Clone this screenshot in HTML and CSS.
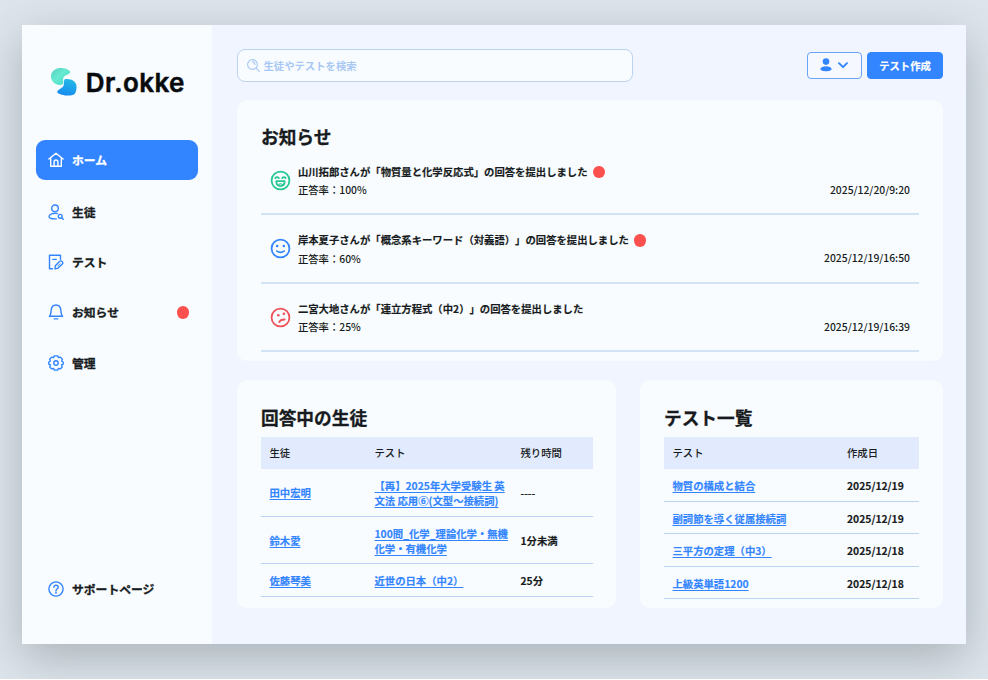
FILE: index.html
```html
<!DOCTYPE html>
<html lang="ja">
<head>
<meta charset="utf-8">
<title>Dr.okke</title>
<link rel="stylesheet" href="styles.css">
</head>
<body>
<div class="stage">
<div class="window">
  <aside class="sidebar">
    <div class="logo">
      <svg class="logo-mark" width="28" height="30" viewBox="0 0 28 30">
        <defs>
          <linearGradient id="mint" x1="0" y1="0" x2="1" y2="1"><stop offset="0" stop-color="#55cdc4"/><stop offset=".45" stop-color="#68ead0"/><stop offset="1" stop-color="#43d8d0"/></linearGradient>
          <linearGradient id="sky" x1=".7" y1="0" x2=".4" y2="1"><stop offset="0" stop-color="#25b9e6"/><stop offset="1" stop-color="#168cf0"/></linearGradient>
        </defs>
        <path fill="url(#mint)" d="M19.800 4C17.500 1.500 13.500 .7 9.800 1.100 4.500 1.700 1 5 1 9.400 1 14.200 5 17.800 9.800 17.900 12.300 18 13.300 17 13.300 15.200 13.300 12.800 12.600 11.300 14.200 9.400 15.800 7.700 22 6.600 19.800 4Z"/>
        <path fill="url(#sky)" d="M15.600 12.100C21.500 11.600 26.300 14.600 26.500 19 26.600 22.500 26 26.300 23.800 27.600 19.600 29.700 9.400 28 7.400 25.400 6.600 23.600 10.200 22.200 12 20.600 14.400 18.500 13.700 17 14 14.700 14.100 13.300 14.400 12.300 15.600 12.100Z"/>
      </svg>
      <span class="logo-text">Dr.okke</span>
    </div>
    <nav class="nav">
      <a class="nav-item active">
        <svg class="icon" viewBox="0 0 16 16"><path d="M.9 7 8 1.200 15.100 7M2.700 5.800V14.300H13.300V5.800M6.100 14.300V10Q6.100 8 8 8T9.900 10V14.300"/></svg>
        <span>ホーム</span></a>
      <a class="nav-item">
        <svg class="icon" viewBox="0 0 16 16"><circle cx="7" cy="4.300" r="3.300"/><path d="M9.200 9.500C5 8.800 1 10.200 1 12.600 1 14.500 4 15 8.300 14.900"/><circle cx="12.200" cy="12.300" r="1.900"/><path d="M13.700 13.700 15.200 15.200"/></svg>
        <span>生徒</span></a>
      <a class="nav-item">
        <svg class="icon" viewBox="0 0 16 16"><path d="M4.500 14.800H1.500V1.200H12.500V5.200M4.800 5.400H8.300"/><path d="M7 14.900 7.300 11.700 11.700 7.300C13 6 15.700 8.500 14.400 9.900L10.100 14.100Z"/><path class="fine" d="M9.700 12 12 9.700"/></svg>
        <span>テスト</span></a>
      <a class="nav-item">
        <svg class="icon" viewBox="0 0 16 16"><path d="M1.400 12.300H14.600C13.300 11.200 13.100 9.900 12.900 6.800 12.700 3.300 11 1 8 1S3.300 3.300 3.100 6.800C2.900 9.900 2.700 11.200 1.400 12.300ZM6.300 14.900H9.700"/></svg>
        <span>お知らせ</span><i class="dot"></i></a>
      <a class="nav-item">
        <svg class="icon" viewBox="0 0 16 16"><path d="M6.300 .9H9.700L10.500 2.600 12.400 2.100 14.300 4.200 13.600 6 15.200 7V9.200L13.600 10 14.200 11.900 12.300 13.900 10.500 13.400 9.700 15.100H6.300L5.500 13.400 3.700 13.900 1.800 11.900 2.400 10 .8 9.200V7L2.400 6 1.700 4.200 3.600 2.100 5.500 2.600Z"/><circle cx="8" cy="8" r="2.200"/></svg>
        <span>管理</span></a>
    </nav>
    <a class="nav-item support">
      <svg class="icon" viewBox="0 0 16 16"><circle cx="8" cy="8" r="7.100"/><path d="M5.900 6.300C5.900 3.400 10.200 3.600 10.200 6.200 10.200 8 8 7.900 8 9.700M8 11.300V12.300"/></svg>
      <span>サポートページ</span></a>
  </aside>
  <main class="main">
    <header class="topbar">
      <div class="search">
        <svg class="search-icon" viewBox="0 0 13 13"><circle cx="5.500" cy="5.500" r="4.900"/><path d="M9.100 9.100 12.300 12.300M5.400 2.900Q7.800 3 7.900 5.500"/></svg>
        <span>生徒やテストを検索</span>
      </div>
      <div class="actions">
        <button class="btn user">
          <svg width="12" height="14" viewBox="0 0 12 14"><circle cx="6" cy="3.600" r="3.300" fill="#3385ff"/><path fill="#3385ff" d="M.4 11C.8 7.400 11.200 7.400 11.600 11 11.700 14 .3 14 .4 11Z"/></svg>
          <svg class="chevron" width="10" height="7" viewBox="0 0 10 7"><path d="M1 1.200 5 5.200 9 1.200"/></svg>
        </button>
        <button class="btn create">テスト作成</button>
      </div>
    </header>

    <section class="card news">
      <h2>お知らせ</h2>
      <div class="news-row">
        <svg class="face green" viewBox="0 0 20 20"><circle cx="10" cy="10" r="8.500"/><path d="M5 7.700Q6.700 5.700 8.400 7.700M11.600 7.700Q13.300 5.700 15 7.700M6 10.500H14C14 13.800 12.600 15.300 10 15.300S6 13.800 6 10.500Z"/><path class="fine" d="M8.300 13.800Q10 12.300 11.700 13.800"/></svg>
        <div class="news-body"><p class="news-title">山川拓郎さんが「物質量と化学反応式」の回答を提出しました<i class="dot"></i></p><p>正答率：100%</p></div>
        <time>2025/12/20/9:20</time>
      </div>
      <div class="news-row">
        <svg class="face blue" viewBox="0 0 20 20"><circle cx="10" cy="10" r="8.500"/><path d="M6.500 12.500Q10 14.900 13.500 12.500"/><circle class="eye" cx="6.800" cy="7.600" r="1.250"/><circle class="eye" cx="13.200" cy="7.600" r="1.250"/></svg>
        <div class="news-body"><p class="news-title">岸本夏子さんが「概念系キーワード（対義語）」の回答を提出しました<i class="dot"></i></p><p>正答率：60%</p></div>
        <time>2025/12/19/16:50</time>
      </div>
      <div class="news-row">
        <svg class="face red" viewBox="0 0 20 20"><circle cx="10" cy="10" r="8.500"/><path d="M8.800 14.300Q10 11.800 14 11.900"/><circle class="eye" cx="7.900" cy="7.900" r="1.250"/><circle class="eye" cx="13.200" cy="6.400" r="1.250"/></svg>
        <div class="news-body"><p class="news-title">二宮大地さんが「連立方程式（中2）」の回答を提出しました</p><p>正答率：25%</p></div>
        <time>2025/12/19/16:39</time>
      </div>
    </section>

    <div class="columns">
      <section class="card">
        <h2>回答中の生徒</h2>
        <div class="table students">
          <div class="tr head"><span>生徒</span><span>テスト</span><span>残り時間</span></div>
          <div class="tr tall"><span><a>田中宏明</a></span><span><a>【再】2025年大学受験生 英<br>文法 応用⑥(文型～接続詞)</a></span><span class="blank">----</span></div>
          <div class="tr tall"><span><a>鈴木愛</a></span><span><a>100問_化学_理論化学・無機<br>化学・有機化学</a></span><span>1分未満</span></div>
          <div class="tr"><span><a>佐藤琴美</a></span><span><a>近世の日本（中2）</a></span><span>25分</span></div>
        </div>
      </section>
      <section class="card">
        <h2>テスト一覧</h2>
        <div class="table tests">
          <div class="tr head"><span>テスト</span><span>作成日</span></div>
          <div class="tr"><span><a>物質の構成と結合</a></span><span>2025/12/19</span></div>
          <div class="tr"><span><a>副詞節を導く従属接続詞</a></span><span>2025/12/19</span></div>
          <div class="tr"><span><a>三平方の定理（中3）</a></span><span>2025/12/18</span></div>
          <div class="tr"><span><a>上級英単語1200</a></span><span>2025/12/18</span></div>
        </div>
      </section>
    </div>
  </main>
</div>
</div>
</body>
</html>
```
FILE: styles.css
```css
* { box-sizing: border-box; }
body {
  margin: 0;
  background: #fff;
  color: #171b20;
  font-family: "Noto Sans CJK JP", sans-serif;
  font-size: 10.35px;
  line-height: 15px;
  text-spacing-trim: space-all;
}
p, h2 { margin: 0; }
.stage {
  height: 679px;
  padding: 25.400px 22px 35.500px;
  background: #dee5ec;
  overflow: hidden;
}
.window {
  display: grid;
  grid-template-columns: 190.400px 1fr;
  height: 618.500px;
  background: #f0f5ff;
  box-shadow: 0 14px 44px rgba(110, 120, 125, .46);
}
.sidebar {
  display: flex;
  flex-direction: column;
  padding: 41px 14px 34.800px;
  background: #f8fcff;
}
.logo { display: flex; height: 34px; padding-left: 14px; }
.logo-mark { flex: none; margin-top: 1px; }
.logo-text {
  margin-left: 7.800px;
  color: #080b0d;
  font: 600 26px/34px Inter, sans-serif;
  letter-spacing: .45px;
  -webkit-text-stroke: .5px #080b0d;
  white-space: nowrap;
}
.nav { display: flex; flex-direction: column; gap: 10.500px; margin-top: 40px; }
.nav-item {
  display: flex;
  align-items: center;
  height: 39.800px;
  padding: 0 9px 0 11.500px;
  border-radius: 9px;
  font-size: 11.800px;
  font-weight: 700;
  -webkit-text-stroke: .3px currentColor;
}
.nav-item:first-child { margin-bottom: 1.300px; }
.nav-item span { margin: 0 0 1.500px 8.500px; }
.icon { width: 16px; height: 16px; margin-bottom: .5px; fill: none; stroke: #3385ff; stroke-width: 1.400; stroke-linejoin: round; stroke-linecap: round; }
.fine { stroke-width: 1; }
.active { background: #3385ff; color: #fff; }
.active .icon { stroke: #fff; }
.dot { width: 12px; height: 12.500px; border-radius: 50%; background: #fc504f; }
.nav-item .dot { margin-left: auto; }
.support { margin-top: auto; }

.main { padding: 24px 23px 36px 24.600px; }
.topbar { display: flex; justify-content: space-between; height: 33px; }
.search {
  display: flex;
  align-items: center;
  gap: 3.500px;
  width: 396px;
  padding: 0 0 1.500px 9px;
  border: 1px solid #bdd2ef;
  border-radius: 8px;
  background: #f8fcff;
  color: #a8c8f3;
  font-weight: 700;
}
.search-icon { width: 13px; height: 13px; fill: none; stroke: #a8c8f3; stroke-width: 1.100; stroke-linecap: round; }
.actions { display: flex; gap: 5.500px; padding-top: 2.500px; }
.btn {
  display: flex;
  align-items: center;
  justify-content: center;
  height: 27px;
  padding: 0;
  border: 1px solid #3385ff;
  border-radius: 4px;
  font: 700 10.350px/15px "Noto Sans CJK JP", sans-serif;
}
.user { width: 55px; gap: 5.500px; border-color: #6aa3f8; background: #f5f9ff; }
.create { width: 76px; background: #3385ff; color: #fff; -webkit-text-stroke: .2px currentColor; }
.chevron { fill: none; stroke: #3385ff; stroke-width: 1.900; stroke-linecap: round; stroke-linejoin: round; }

.card { padding: 25px 24px 0; border-radius: 10px; background: #f8fcff; }
h2 { font-size: 17.700px; line-height: 24px; font-weight: 700; -webkit-text-stroke: .3px currentColor; }
.news { height: 261px; margin-top: 17.500px; padding-top: 24px; }
.news-row {
  display: flex;
  height: 68.200px;
  padding: 16px 9px 0;
  border-bottom: 2px solid #d3e3f6;
}
.news h2 + .news-row { height: 67.500px; padding-top: 15px; }
.face { width: 21px; height: 21px; margin-top: 7px; fill: none; stroke-width: 1.700; stroke-linecap: round; stroke-linejoin: round; }
.face .fine { stroke-width: 1; }
.green { stroke: #27c791; }
.blue { stroke: #3385ff; }
.red { stroke: #ed5157; }
.blue .eye { fill: #3385ff; stroke: none; }
.red .eye { fill: #ed5157; stroke: none; }
.news-body { flex: 1; margin-left: 6.900px; }
.news-body p { height: 18.200px; line-height: 18.200px; }
.news-body .news-title { display: flex; align-items: center; font-weight: 700; -webkit-text-stroke: .15px currentColor; }
.news-title .dot { margin-left: 5.500px; }
.news-body, time { font-weight: 500; }
time { margin-top: 19px; }

.columns { display: grid; grid-template-columns: 379px 303px; gap: 24px; margin-top: 19px; }
.columns .card { height: 228px; }
.columns h2 { height: 32px; }
.tr {
  display: grid;
  align-items: center;
  height: 32.650px;
  padding: 1.500px 0 0 8.500px;
  border-bottom: 1px solid #bdd3f2;
  font-weight: 700;
  -webkit-text-stroke: .15px currentColor;
}
.students .tr { grid-template-columns: 105px 146px 1fr; width: 332px; }
.tests .tr { grid-template-columns: 174.500px 1fr; }
.tr.head { height: 32px; padding: 0 0 .5px 8.500px; border: 0; background: #e2eafd; font-weight: 500; -webkit-text-stroke: 0; }
.tr.tall { height: 47.700px; }
.blank { font-weight: 500; }
.tr a { color: #3385ff; -webkit-text-stroke: .15px #3385ff; text-decoration: underline; text-decoration-thickness: 1px; text-underline-offset: 1.500px; white-space: nowrap; }
```
